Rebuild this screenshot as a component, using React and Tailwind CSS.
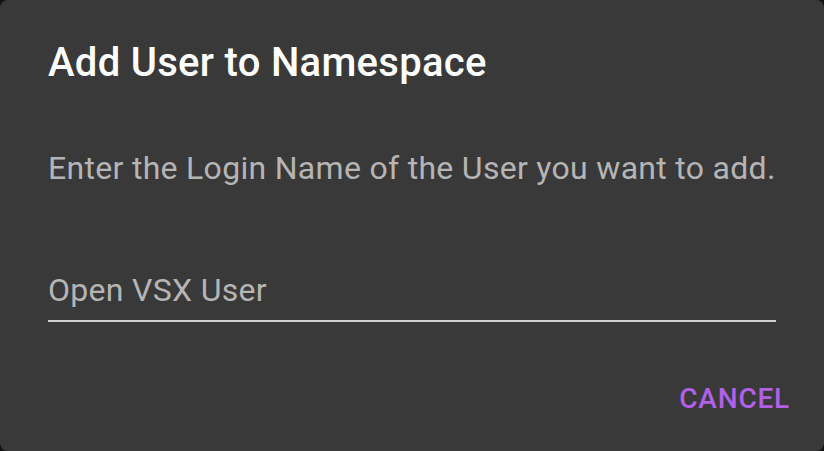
export default function App() {
  return (
    <div className="w-[824px] h-[451px] bg-[#121212]" style={{ fontFamily: "Roboto, 'Liberation Sans', sans-serif" }}>
      <div className="w-full h-full bg-[#393939] rounded-lg flex flex-col">
        <div className="px-12 pt-[31px] pb-0 h-[96px]">
          <h2 className="text-[40px] leading-[64px] font-medium text-white tracking-[0.3px]">Add User to Namespace</h2>
        </div>
        <div className="px-12 pt-[48px]">
          <p className="text-[32px] leading-[48px] text-[#b5b5b5] tracking-[0.3px]">Enter the Login Name of the User you want to add.</p>
          <div className="mt-[70px] w-[728px] h-[60px] border-b-2 border-[#cfcfcf] flex items-end pb-[10px]">
            <span className="text-[32px] leading-[40px] text-[#b5b5b5] tracking-[0.3px]">Open VSX User</span>
          </div>
        </div>
        <div className="flex justify-end pr-[34px] mt-[57px]">
          <button className="text-[28px] leading-[40px] font-medium text-[#b160e8] tracking-[0.8px] uppercase">Cancel</button>
        </div>
      </div>
    </div>
  );
}
